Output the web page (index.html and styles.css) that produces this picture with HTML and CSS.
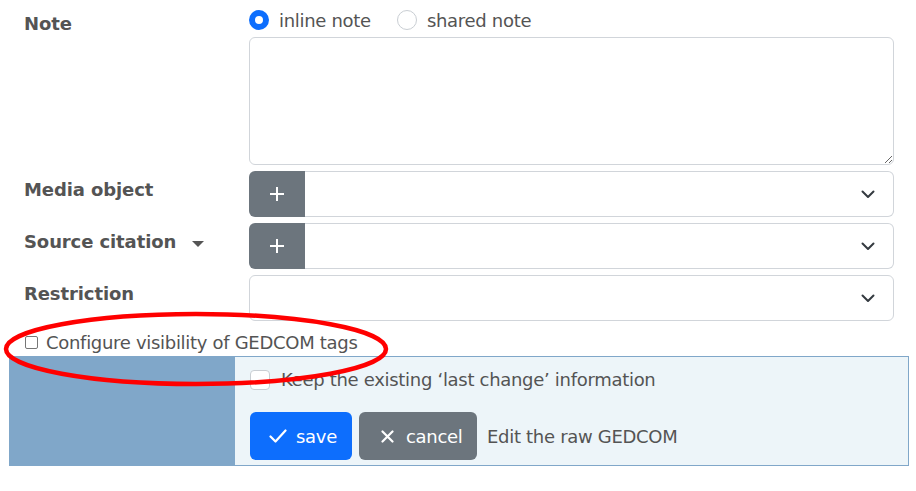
FILE: index.html
```html
<!DOCTYPE html>
<html>
<head>
<meta charset="utf-8">
<link rel="stylesheet" href="styles.css">
</head>
<body>
<div class="page">
  <div class="form-grid">
    <div class="label label-note">Note</div>
    <div class="control">
      <div class="radios">
        <label class="radio-item"><span class="radio checked"></span>inline note</label>
        <label class="radio-item"><span class="radio"></span>shared note</label>
      </div>
      <textarea class="textarea"></textarea>
    </div>

    <div class="label">Media object</div>
    <div class="select-group">
      <span class="add-btn"><svg width="18" height="18" viewBox="0 0 18 18"><path d="M9 2v14M2 9h14" stroke="#fff" stroke-width="2"/></svg></span>
      <span class="select"><svg class="chev" width="16" height="12" viewBox="0 0 16 12"><path d="M2.5 3.5l5.5 5.5 5.5-5.5" fill="none" stroke="#343a40" stroke-width="2" stroke-linecap="round" stroke-linejoin="round"/></svg></span>
    </div>

    <div class="label">Source citation <span class="caret"></span></div>
    <div class="select-group">
      <span class="add-btn"><svg width="18" height="18" viewBox="0 0 18 18"><path d="M9 2v14M2 9h14" stroke="#fff" stroke-width="2"/></svg></span>
      <span class="select"><svg class="chev" width="16" height="12" viewBox="0 0 16 12"><path d="M2.5 3.5l5.5 5.5 5.5-5.5" fill="none" stroke="#343a40" stroke-width="2" stroke-linecap="round" stroke-linejoin="round"/></svg></span>
    </div>

    <div class="label">Restriction</div>
    <div class="select-group">
      <span class="select full"><svg class="chev" width="16" height="12" viewBox="0 0 16 12"><path d="M2.5 3.5l5.5 5.5 5.5-5.5" fill="none" stroke="#343a40" stroke-width="2" stroke-linecap="round" stroke-linejoin="round"/></svg></span>
    </div>
  </div>

  <div class="config-row">
    <span class="small-check"></span>Configure visibility of GEDCOM tags
    <svg class="annotation" width="400" height="90" viewBox="0 0 400 90"><ellipse cx="196" cy="42" rx="190" ry="35" fill="none" stroke="#ff0000" stroke-width="4.5"/></svg>
  </div>

  <div class="panel">
    <div class="panel-left"></div>
    <div class="panel-right">
      <div class="keep-row"><span class="big-check"></span>Keep the existing ‘last change’ information</div>
      <div class="btn-row">
        <span class="btn btn-primary"><svg width="18" height="14" viewBox="0 0 18 14"><path d="M1.5 7.5l5 5L16.5 1.5" fill="none" stroke="#fff" stroke-width="2.2" stroke-linecap="round" stroke-linejoin="round"/></svg>save</span>
        <span class="btn btn-secondary"><svg width="13" height="13" viewBox="0 0 13 13"><path d="M1.5 1.5l10 10M11.5 1.5l-10 10" stroke="#fff" stroke-width="2.2" stroke-linecap="round"/></svg>cancel</span>
        <span class="raw">Edit the raw GEDCOM</span>
      </div>
    </div>
  </div>
</div>
</body>
</html>
```

FILE: styles.css
```css
html, body {
  margin: 0;
  padding: 0;
  background: #fff;
}
body {
  font-family: "DejaVu Sans", Verdana, sans-serif;
  font-size: 18px;
  color: #545454;
  letter-spacing: -0.3px;
}
.page {
  width: 916px;
  height: 491px;
  position: relative;
}
.form-grid {
  display: grid;
  grid-template-columns: 225px 645px;
  row-gap: 6px;
  padding: 6px 0 0 24px;
}
.label {
  font-weight: bold;
  line-height: 27px;
  padding-top: 5px;
  letter-spacing: -0.1px;
  color: #545454;
  display: flex;
  align-items: center;
  height: 27px;
}
.label-note {
  padding-top: 4px;
}
.caret {
  display: inline-block;
  width: 0;
  height: 0;
  margin-left: 16px;
  margin-top: 5px;
  border-left: 6px solid transparent;
  border-right: 6px solid transparent;
  border-top: 6px solid #555;
}
.control {
  display: flex;
  flex-direction: column;
}
.radios {
  display: flex;
  align-items: center;
  height: 28px;
  padding-bottom: 3px;
  gap: 26px;
}
.radio-item {
  display: flex;
  align-items: center;
  gap: 10px;
  line-height: 27px;
}
.radio {
  box-sizing: border-box;
  width: 20px;
  height: 20px;
  border: 1px solid #c9ced3;
  border-radius: 50%;
}
.radio.checked {
  border: 6px solid #0d6efd;
  background: #fff;
}
.textarea {
  display: block;
  width: 645px;
  height: 128px;
  box-sizing: border-box;
  border: 1px solid #d1d5da;
  border-radius: 6px;
  margin: 0;
  padding: 6px 12px;
  font-family: inherit;
  font-size: 18px;
  resize: vertical;
  background: #fff;
}
.select-group {
  display: flex;
  height: 46px;
}
.add-btn {
  width: 56px;
  background: #6c757d;
  border-radius: 6px 0 0 6px;
  display: flex;
  align-items: center;
  justify-content: center;
}
.select {
  flex: 1;
  border: 1px solid #d1d5da;
  border-left: none;
  border-radius: 0 6px 6px 0;
  display: flex;
  align-items: center;
  justify-content: flex-end;
  padding-right: 17px;
  background: #fff;
}
.select.full {
  border-left: 1px solid #d1d5da;
  border-radius: 6px;
}
.config-row {
  position: relative;
  display: flex;
  align-items: center;
  height: 27px;
  line-height: 27px;
  margin: 8px 0 0 24px;
}
.small-check {
  width: 13px;
  height: 13px;
  box-sizing: border-box;
  border: 1px solid #767676;
  border-radius: 2px;
  margin: 0 8px 0 1px;
  background: #fff;
}
.annotation {
  position: absolute;
  left: -24px;
  top: -22px;
  pointer-events: none;
  z-index: 5;
}
.panel {
  display: flex;
  margin-left: 9px;
  width: 900px;
  height: 110px;
}
.panel-left {
  width: 226px;
  background: #80a7c9;
}
.panel-right {
  flex: 1;
  background: #edf5f9;
  border: 1px solid #80a7c9;
  border-left: none;
  padding: 9px 0 0 15px;
  box-sizing: border-box;
}
.keep-row {
  display: flex;
  align-items: center;
  height: 27px;
  line-height: 27px;
  gap: 11px;
}
.big-check {
  width: 20px;
  height: 20px;
  box-sizing: border-box;
  border: 1px solid #c9ced3;
  border-radius: 4px;
  background: #fff;
}
.btn-row {
  display: flex;
  align-items: center;
  margin-top: 19px;
  gap: 7px;
}
.btn {
  display: flex;
  align-items: center;
  height: 48px;
  box-sizing: border-box;
  border-radius: 6px;
  color: #fff;
}
.btn-primary {
  background: #0d6efd;
  width: 102px;
  padding-left: 19px;
  gap: 9px;
}
.btn-secondary {
  background: #6c757d;
  width: 118px;
  padding-left: 22px;
  gap: 12px;
}
.raw {
  margin-left: 3px;
}
```
